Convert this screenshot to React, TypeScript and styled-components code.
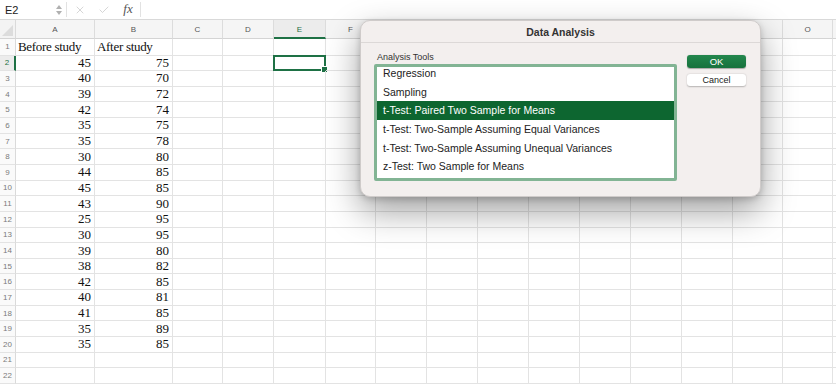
import styled, { createGlobalStyle } from 'styled-components';
import { X, Check } from 'lucide-react';

const GlobalStyle = createGlobalStyle`
  html, body {
    margin: 0;
    padding: 0;
    background: #fff;
    overflow: hidden;
  }
  * {
    box-sizing: border-box;
  }
`;

const Page = styled.div`
  position: relative;
  width: 836px;
  height: 386px;
  overflow: hidden;
  background: #fff;
  font-family: 'Liberation Sans', Arial, sans-serif;
`;

const FormulaBar = styled.div`
  display: flex;
  align-items: center;
  height: 20px;
  border-bottom: 1px solid #d9d9d9;
  background: #fff;
`;

const NameBox = styled.div`
  width: 52px;
  padding-left: 5px;
  font-size: 11px;
  color: #222;
`;

const Stepper = styled.div`
  display: flex;
  flex-direction: column;
  gap: 2px;
  width: 14px;
  align-items: center;
`;

const Divider = styled.div`
  width: 1px;
  height: 15px;
  background: #e2e2e2;
`;

const BarIcon = styled.div`
  display: flex;
  align-items: center;
  justify-content: center;
  width: 24px;
  color: #c4c4c4;
`;

const Fx = styled.div`
  width: 24px;
  text-align: center;
  font-family: 'Liberation Serif', 'Times New Roman', serif;
  font-style: italic;
  font-size: 13px;
  color: #555;
  margin-top: -2px;
`;

const Sheet = styled.div`
  display: grid;
  grid-template-columns: 16px 79px 78px 50px 51px 52px 50px repeat(7, 51px) 50px 50px 1fr;
  grid-template-rows: 19px 16.5px;
  grid-auto-rows: 15.65px;
`;

const Corner = styled.div`
  position: relative;
  background: #f3f3f3;
  border-right: 1px solid #dadada;
  border-bottom: 1px solid #d4d4d4;
  &::after {
    content: '';
    position: absolute;
    right: 2px;
    bottom: 2px;
    border-left: 11px solid transparent;
    border-bottom: 11px solid #dcdcdc;
  }
`;

const ColHeader = styled.div<{ $active?: boolean }>`
  display: flex;
  align-items: center;
  justify-content: center;
  background: ${(p) => (p.$active ? '#ececec' : '#f5f5f5')};
  border-right: 1px solid #dcdcdc;
  border-bottom: ${(p) => (p.$active ? '2px solid #1e7145' : '1px solid #d4d4d4')};
  font-size: 8px;
  color: ${(p) => (p.$active ? '#1e7145' : '#555')};
  padding-top: 1px;
`;

const RowHeader = styled.div<{ $active?: boolean }>`
  display: flex;
  align-items: center;
  justify-content: center;
  background: ${(p) => (p.$active ? '#ececec' : '#fafafa')};
  border-right: ${(p) => (p.$active ? '2px solid #1e7145' : '1px solid #dadada')};
  border-bottom: 1px solid #e3e3e3;
  font-size: 8px;
  color: ${(p) => (p.$active ? '#1e7145' : '#7a7a7a')};
`;

const Cell = styled.div<{ $num?: boolean; $selected?: boolean }>`
  position: relative;
  display: flex;
  align-items: center;
  justify-content: ${(p) => (p.$num ? 'flex-end' : 'flex-start')};
  padding: 0 3px 0 2px;
  border-right: 1px solid #e3e3e3;
  border-bottom: 1px solid #e3e3e3;
  font-family: 'Liberation Serif', 'Times New Roman', serif;
  font-size: 13px;
  letter-spacing: ${(p) => (p.$num ? '0' : '-0.3px')};
  color: #111;
  white-space: nowrap;
  overflow: visible;

  ${(p) =>
    p.$selected &&
    `
    &::before {
      content: '';
      position: absolute;
      left: -1px;
      top: -1px;
      right: -1px;
      bottom: -1px;
      border: 2px solid #1e7145;
    }
    &::after {
      content: '';
      position: absolute;
      right: -3px;
      bottom: -3px;
      width: 5px;
      height: 5px;
      background: #1e7145;
      border: 1px solid #fff;
    }
  `}
`;

const Dialog = styled.div`
  position: absolute;
  left: 360px;
  top: 20px;
  width: 401px;
  height: 177px;
  background: #f3efee;
  border: 1px solid #cfcbca;
  border-radius: 10px;
  box-shadow: 0 14px 34px rgba(0, 0, 0, 0.38), 0 2px 6px rgba(0, 0, 0, 0.18);
  display: flex;
  flex-direction: column;
`;

const DialogTitle = styled.div`
  height: 22px;
  display: flex;
  align-items: center;
  justify-content: center;
  border-bottom: 1px solid #dcd8d7;
  font-size: 10.5px;
  font-weight: 700;
  color: #333;
`;

const DialogBody = styled.div`
  display: flex;
  padding: 9px 13px 0 13px;
  gap: 10px;
`;

const ToolsColumn = styled.div`
  display: flex;
  flex-direction: column;
  gap: 2px;
`;

const FieldLabel = styled.div`
  font-size: 9px;
  color: #333;
  padding-left: 3px;
`;

const ListBox = styled.div`
  width: 303px;
  height: 117px;
  border: 3px solid #82b494;
  border-radius: 2px;
  background: #fff;
  overflow: hidden;
`;

const ListInner = styled.div`
  margin-top: -3.5px;
`;

const ListItem = styled.div<{ $selected?: boolean }>`
  height: 18.7px;
  display: flex;
  align-items: center;
  padding-left: 6px;
  font-size: 10.5px;
  color: ${(p) => (p.$selected ? '#fff' : '#222')};
  background: ${(p) => (p.$selected ? '#0d6630' : 'transparent')};
`;

const ButtonColumn = styled.div`
  display: flex;
  flex-direction: column;
  gap: 6px;
  padding-top: 3px;
`;

const DialogButton = styled.div<{ $primary?: boolean }>`
  width: 59px;
  height: 12.5px;
  border-radius: 3px;
  display: flex;
  align-items: center;
  justify-content: center;
  font-size: ${(p) => (p.$primary ? '9.5px' : '9px')};
  color: ${(p) => (p.$primary ? '#fff' : '#222')};
  background: ${(p) => (p.$primary ? 'linear-gradient(#23874d, #17723d)' : '#fff')};
  box-shadow: ${(p) =>
    p.$primary ? '0 0.5px 1px rgba(0,0,0,0.3)' : '0 0.5px 1.5px rgba(0,0,0,0.25)'};
`;

const columns = ['A', 'B', 'C', 'D', 'E', 'F', 'G', 'H', 'I', 'J', 'K', 'L', 'M', 'N', 'O', 'P'];

// headers hidden under the dialog or past the right edge
const hiddenHeaders = ['G', 'H', 'I', 'J', 'K', 'L', 'M', 'N', 'P'];

const before = [45, 40, 39, 42, 35, 35, 30, 44, 45, 43, 25, 30, 39, 38, 42, 40, 41, 35, 35];
const after = [75, 70, 72, 74, 75, 78, 80, 85, 85, 90, 95, 95, 80, 82, 85, 81, 85, 89, 85];

const tools = [
  'Regression',
  'Sampling',
  't-Test: Paired Two Sample for Means',
  't-Test: Two-Sample Assuming Equal Variances',
  't-Test: Two-Sample Assuming Unequal Variances',
  'z-Test: Two Sample for Means',
];

function cellValue(row: number, col: number): { text: string; num: boolean } {
  if (row === 1) {
    if (col === 0) return { text: 'Before study', num: false };
    if (col === 1) return { text: 'After study', num: false };
    return { text: '', num: false };
  }
  const i = row - 2;
  if (i < before.length) {
    if (col === 0) return { text: String(before[i]), num: true };
    if (col === 1) return { text: String(after[i]), num: true };
  }
  return { text: '', num: false };
}

const App = () => {
  const rows = Array.from({ length: 22 }, (_, i) => i + 1);

  return (
    <Page>
      <GlobalStyle />
      <FormulaBar>
        <NameBox>E2</NameBox>
        <Stepper>
          <svg width="6" height="4" viewBox="0 0 6 4">
            <path d="M0 4 L3 0 L6 4 Z" fill="#b0b0b0" />
          </svg>
          <svg width="6" height="4" viewBox="0 0 6 4">
            <path d="M0 0 L3 4 L6 0 Z" fill="#b0b0b0" />
          </svg>
        </Stepper>
        <Divider />
        <BarIcon style={{ marginLeft: 1 }}>
          <X size={12} strokeWidth={1.4} />
        </BarIcon>
        <BarIcon>
          <Check size={12} strokeWidth={1.4} />
        </BarIcon>
        <Fx>fx</Fx>
        <Divider />
      </FormulaBar>

      <Sheet>
        <Corner />
        {columns.map((c) => (
          <ColHeader key={c} $active={c === 'E'}>
            {hiddenHeaders.includes(c) ? '' : c}
          </ColHeader>
        ))}
        {rows.map((r) => (
          <Row key={r} row={r} />
        ))}
      </Sheet>

      <Dialog>
        <DialogTitle>Data Analysis</DialogTitle>
        <DialogBody>
          <ToolsColumn>
            <FieldLabel>Analysis Tools</FieldLabel>
            <ListBox>
              <ListInner>
                {tools.map((t, i) => (
                  <ListItem key={t} $selected={i === 2}>
                    {t}
                  </ListItem>
                ))}
              </ListInner>
            </ListBox>
          </ToolsColumn>
          <ButtonColumn>
            <DialogButton $primary>OK</DialogButton>
            <DialogButton>Cancel</DialogButton>
          </ButtonColumn>
        </DialogBody>
      </Dialog>
    </Page>
  );
};

const Row = ({ row }: { row: number }) => (
  <>
    <RowHeader $active={row === 2}>{row}</RowHeader>
    {columns.map((c, ci) => {
      const v = cellValue(row, ci);
      return (
        <Cell key={c} $num={v.num} $selected={row === 2 && c === 'E'}>
          {v.text}
        </Cell>
      );
    })}
  </>
);

export default App;
